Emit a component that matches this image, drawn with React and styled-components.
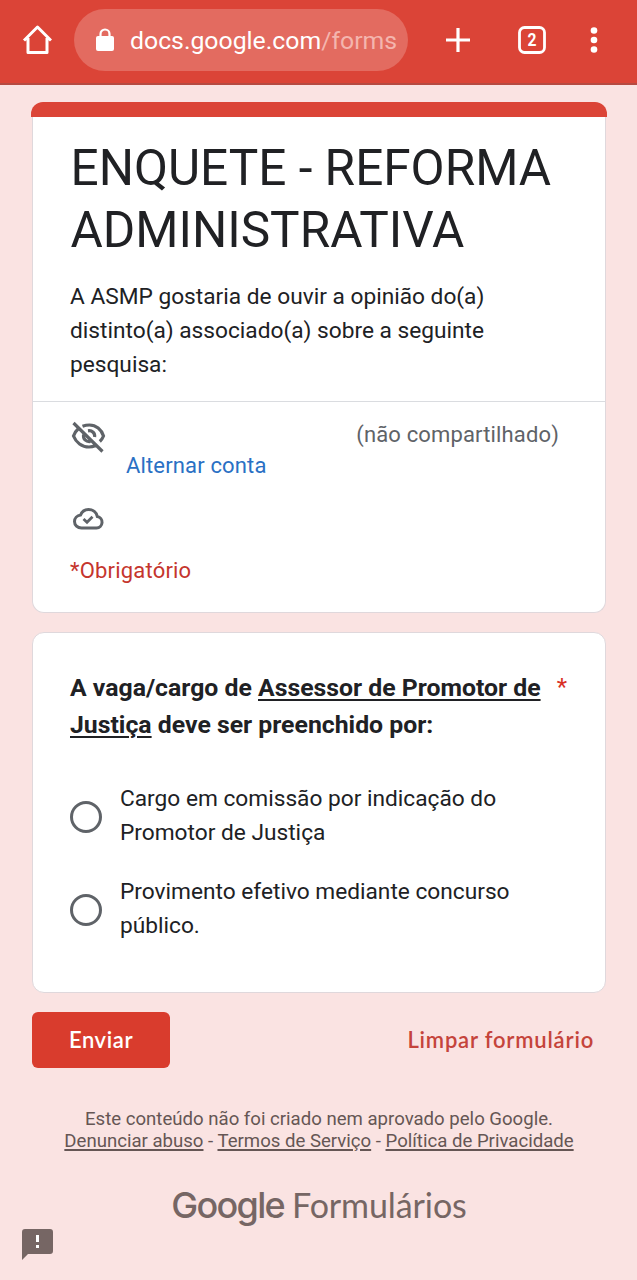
import React from "react";
import styled, { createGlobalStyle } from "styled-components";

const Global = createGlobalStyle`
  * { box-sizing: border-box; }
  body { margin: 0; background: #fae3e2; font-family: Roboto, "Liberation Sans", sans-serif; color: #202124; }
  h1, h2, p { margin: 0; font-weight: 400; }
`;
const Page = styled.div`
  width: 637px; height: 1280px; overflow: hidden; display: flex; flex-direction: column; background: #fae3e2;
`;
const Toolbar = styled.header`
  height: 85px; flex: none; display: flex; align-items: flex-start; background: #db4437;
  border-bottom: 2px solid #b64a41; padding: 9px 0 0 22px;
`;
const ToolIcon = styled.span`
  display: flex; flex: none; width: ${(p) => p.$w}px; height: 62px; margin-left: ${(p) => p.$gap || 0}px;
  align-items: center; justify-content: center;
  svg { display: block; }
`;
const AddressBar = styled.div`
  width: 334px; height: 62px; margin-left: 22px; border-radius: 31px; background: #e36b60;
  display: flex; align-items: center; padding-left: 22px; color: #fff; flex: none;
  svg { display: block; flex: none; }
`;
const Url = styled.span`
  margin-left: 16px; font-size: 24.8px; line-height: 30px; white-space: nowrap; padding-top: 1px;
  span { color: #f4b5ae; }
`;
const Main = styled.main`
  padding: 17px 30px 0 31px; display: flex; flex-direction: column;
`;
const Accent = styled.div`
  height: 15px; background: #db4437; border-radius: 12px 12px 0 0;
`;
const Card = styled.section`
  margin: 0 1px; background: #fff; border: 1px solid #dfd8dc;
  border-radius: ${(p) => (p.$joined ? "0 0 12px 12px" : "12px")};
  ${(p) => p.$joined && "border-top: 0;"}
  height: ${(p) => p.$h}px; margin-bottom: 19px;
`;
const Intro = styled.div`
  padding: 20px 37px 0; height: 285px; border-bottom: 1px solid #dadce0;
`;
const Title = styled.h1`
  font-size: 49.5px; line-height: 62px; white-space: nowrap; padding-left: 0.5px;
`;
const Body = styled.p`
  font-size: 22.7px; line-height: 34px; white-space: nowrap;
`;
const Description = styled(Body)`
  margin-top: 19px;
`;
const Account = styled.div`
  padding: 17px 46px 0 38px; display: grid; grid-template-columns: 55px 1fr; color: #5f6368;
  svg { display: block; }
`;
const AccountText = styled.div`
  font-size: 22px; line-height: 31px; letter-spacing: 0.15px;
`;
const Shared = styled.div`
  text-align: right; white-space: nowrap;
`;
const Link = styled.div`
  color: #2a70c4;
`;
const Saved = styled.div`
  padding: 27px 0 0 40px; height: 60px; color: #5f6368;
  svg { display: block; }
`;
const Required = styled.div`
  padding: 14px 0 0 37px; font-size: 22px; line-height: 31px; letter-spacing: 0.2px; color: #c5352d;
`;
const Question = styled.h2`
  padding: 36px 38px 0 37px; font-size: 24.8px; line-height: 37px; font-weight: 700; display: flex;
  justify-content: space-between; white-space: nowrap;
  u { text-decoration-thickness: 2px; text-underline-offset: 3px; }
`;
const Star = styled.span`
  color: #d93025; font-size: 24px; font-weight: 400;
`;
const Option = styled.label`
  display: flex; align-items: center; gap: 18px; padding-left: 37px; margin-top: ${(p) => p.$top}px;
`;
const OptionText = styled(Body)`
  padding-top: 1px; margin-bottom: 3px;
`;
const Radio = styled.span`
  width: 32px; height: 32px; border: 3px solid #5f6368; border-radius: 50%; flex: none;
  margin-bottom: 1px;
`;
const Actions = styled.div`
  display: flex; justify-content: space-between; align-items: center; padding: 0 13px 0 1px; height: 56px;
  font-family: Lato, sans-serif; font-weight: 600; font-size: 22px;
`;
const Submit = styled.button`
  width: 138px; height: 56px; border: 0; border-radius: 6px; background: #d93c2d; color: #fff;
  font: inherit; letter-spacing: 0.6px; padding: 0 0 1px;
`;
const Clear = styled.span`
  color: #c5443b; letter-spacing: 0.8px; white-space: nowrap; padding-bottom: 1px;
`;
const Legal = styled.footer`
  margin-top: 40px; text-align: center; font-size: 18.6px; line-height: 22px; color: #655654; white-space: nowrap;
  u { text-underline-offset: 2px; text-decoration-thickness: 2px; }
`;
const Brand = styled.div`
  margin-top: 30px; height: 49px; display: flex; justify-content: center; align-items: baseline; gap: 8px;
  font-family: Lato, sans-serif; color: #766664; line-height: 46px;
`;
const Google = styled.span`
  font-family: Inter, sans-serif; font-size: 36px; font-weight: 500; letter-spacing: -1.7px;
`;
const Product = styled.span`
  font-size: 34px; letter-spacing: -0.1px;
`;
const Feedback = styled.div`
  padding-left: 22px; margin-top: -2px;
  svg { display: block; }
`;

export default function App() {
  return (
    <Page>
      <Global />
      <Toolbar>
        <ToolIcon $w={30}>
          <svg width="30" height="32" viewBox="0 0 30 32" fill="none" stroke="#fff" strokeWidth="3" strokeLinejoin="round">
            <path d="M2 16.500 15.500 3 29 16.500M6 14v14.500h19V14" />
          </svg>
        </ToolIcon>
        <AddressBar>
          <svg width="18" height="24" viewBox="0 0 18 24">
            <rect y="8" width="18" height="15" rx="2" fill="#fff" />
            <path d="M4.500 9V6a4.500 4.500 0 0 1 9 0v3" fill="none" stroke="#fff" strokeWidth="2.2" />
          </svg>
          <Url>docs.google.com<span>/forms</span></Url>
        </AddressBar>
        <ToolIcon $w={26} $gap={37}>
          <svg width="26" height="26" viewBox="0 0 26 26" stroke="#fff" strokeWidth="3.200"><path d="M13 1v24M1 13h24" /></svg>
        </ToolIcon>
        <ToolIcon $w={30} $gap={46}>
          <svg width="30" height="30" viewBox="0 0 30 30">
            <rect x="2.500" y="2.500" width="25" height="25" rx="5" fill="none" stroke="#fff" strokeWidth="2.800" />
            <text x="15" y="21" textAnchor="middle" fontSize="18" fontWeight="700" fontFamily="Roboto" fill="#fff" textLength="9" lengthAdjust="spacingAndGlyphs">2</text>
          </svg>
        </ToolIcon>
        <ToolIcon $w={8} $gap={43}>
          <svg width="8" height="28" viewBox="0 0 8 28" fill="#fff"><circle cx="4" cy="4.500" r="3.300" /><circle cx="4" cy="14" r="3.300" /><circle cx="4" cy="23.500" r="3.300" /></svg>
        </ToolIcon>
      </Toolbar>
      <Main>
        <Accent />
        <Card $joined $h={496}>
          <Intro>
            <Title>ENQUETE - REFORMA<br />ADMINISTRATIVA</Title>
            <Description>A ASMP gostaria de ouvir a opinião do(a)<br />distinto(a) associado(a) sobre a seguinte<br />pesquisa:</Description>
          </Intro>
          <Account>
            <svg width="36" height="36" viewBox="0 0 36 36" fill="none" stroke="#5f6368" strokeWidth="3.200">
              <path d="M11.500 7.300C13.700 6.500 16 6 18.500 6 25 6 30.500 10.500 32.500 17c-.8 2-2 4-3.700 5.500M7.500 9.500C5.300 11.500 3.500 14 2.500 17c2.500 6.500 8.500 11 15.500 11 2.200 0 4.300-.4 6.200-1.200M2.500 4 31.500 32.500" />
              <path d="M17 11.800c4.200-.6 7.200 2.400 6.600 6.200M12.600 15.500c-.8 4.500 2.400 7.700 7 7" />
            </svg>
            <AccountText>
              <Shared>(não compartilhado)</Shared>
              <Link>Alternar conta</Link>
            </AccountText>
          </Account>
          <Saved>
            <svg width="31" height="22" viewBox="0 0 31 22" fill="none" stroke="#5f6368" strokeWidth="3">
              <path d="M8.500 20h15a5.800 5.800 0 0 0 .8-11.500C23.500 4.500 20 1.500 15.500 1.500 12 1.500 9 3.500 7.600 7 4 7.500 1.500 10.200 1.500 13.500c0 3.600 3 6.500 7 6.500Z" />
              <path d="m10.500 11 3.500 3.300 5.500-5.500" strokeWidth="2.800" />
            </svg>
          </Saved>
          <Required>*Obrigatório</Required>
        </Card>
        <Card $h={361}>
          <Question>
            <span>A vaga/cargo de <u>Assessor de Promotor de</u><br /><u>Justiça</u> deve ser preenchido por:</span>
            <Star>*</Star>
          </Question>
          <Option $top={38}><Radio /><OptionText>Cargo em comissão por indicação do<br />Promotor de Justiça</OptionText></Option>
          <Option $top={21}><Radio /><OptionText>Provimento efetivo mediante concurso<br />público.</OptionText></Option>
        </Card>
        <Actions>
          <Submit>Enviar</Submit>
          <Clear>Limpar formulário</Clear>
        </Actions>
        <Legal>
          <div>Este conteúdo não foi criado nem aprovado pelo Google.</div>
          <div><u>Denunciar abuso</u> - <u>Termos de Serviço</u> - <u>Política de Privacidade</u></div>
        </Legal>
        <Brand><Google>Google</Google><Product>Formulários</Product></Brand>
      </Main>
      <Feedback>
        <svg width="31" height="31" viewBox="0 0 31 31">
          <path d="M3 0h25a3 3 0 0 1 3 3v19a3 3 0 0 1-3 3H6l-6 6V3a3 3 0 0 1 3-3Z" fill="#766664" />
          <path d="M14 6h3v7h-3zM14 16h3v3h-3z" fill="#fff" />
        </svg>
      </Feedback>
    </Page>
  );
}
